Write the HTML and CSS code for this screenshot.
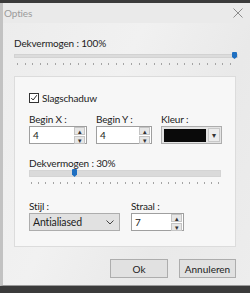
FILE: index.html
```html
<!DOCTYPE html>
<html>
<head>
<meta charset="utf-8">
<link rel="stylesheet" href="styles.css">
</head>
<body>
<div class="window">
  <div class="titlebar">
    <span class="title">Opties</span>
    <span class="close">
      <svg width="10" height="10" viewBox="0 0 10 10"><path d="M0.5 0.5 L9.5 9.5 M9.5 0.5 L0.5 9.5" stroke="#8c8c8c" stroke-width="1" fill="none"/></svg>
    </span>
  </div>
  <div class="content">
    <div class="label top-label">Dekvermogen : 100%</div>
    <div class="slider slider-main">
      <div class="track"></div>
      <div class="thumb" style="left: 218px"></div>
      <div class="ticks"></div>
    </div>

    <div class="panel">
      <label class="check-row">
        <span class="checkbox">
          <svg width="10" height="10" viewBox="0 0 10 10"><path d="M1.5 5 L4 7.5 L8.5 1.5" stroke="#222" stroke-width="1.2" fill="none"/></svg>
        </span>
        <span class="check-text">Slagschaduw</span>
      </label>

      <div class="row fields">
        <div class="field">
          <div class="label">Begin X :</div>
          <div class="spin w58">
            <span class="value">4</span>
            <span class="spin-btns"><span class="sb">▴</span><span class="sb">▾</span></span>
          </div>
        </div>
        <div class="field">
          <div class="label">Begin Y :</div>
          <div class="spin w56">
            <span class="value">4</span>
            <span class="spin-btns"><span class="sb">▴</span><span class="sb">▾</span></span>
          </div>
        </div>
        <div class="field">
          <div class="label">Kleur :</div>
          <div class="color">
            <span class="swatch"></span>
            <span class="drop">▾</span>
          </div>
        </div>
      </div>

      <div class="label mid-label">Dekvermogen : 30%</div>
      <div class="slider slider-inner">
        <div class="track"></div>
        <div class="thumb" style="left: 43px"></div>
        <div class="ticks"></div>
      </div>

      <div class="row fields2">
        <div class="field">
          <div class="label">Stijl :</div>
          <div class="combo">
            <span class="value">Antialiased</span>
            <svg class="chev" width="8" height="5" viewBox="0 0 8 5"><path d="M0.5 0.5 L4 4 L7.5 0.5" stroke="#444" fill="none"/></svg>
          </div>
        </div>
        <div class="field">
          <div class="label">Straal :</div>
          <div class="spin w53">
            <span class="value">7</span>
            <span class="spin-btns"><span class="sb">▴</span><span class="sb">▾</span></span>
          </div>
        </div>
      </div>
    </div>

    <div class="buttons">
      <button class="btn ok">Ok</button>
      <button class="btn">Annuleren</button>
    </div>
  </div>
</div>
</body>
</html>
```

FILE: styles.css
```css
html, body {
  margin: 0;
  padding: 0;
}
body {
  width: 250px;
  height: 293px;
  background: #3b3b3b;
  font-family: "Lato", "Noto Sans", sans-serif;
  font-size: 10px;
  letter-spacing: -0.15px;
  color: #1c1c1c;
  overflow: hidden;
}
.window {
  margin-top: 3px;
  height: 283px;
  background: linear-gradient(115deg, #ececec 0%, #f1f1f1 40%, #e9e9e9 70%, #ededed 100%);
  border-left: 3px solid #c2c2c2;
  border-bottom: 1px solid #9a9a9a;
  box-sizing: border-box;
  position: relative;
}
.titlebar {
  height: 20px;
  display: flex;
  align-items: center;
  justify-content: space-between;
  padding: 0 7px 0 1px;
  background: #eaeaea;
}
.title {
  color: #9b9b9b;
  font-size: 10px;
}
.close {
  display: flex;
  align-items: center;
}
.content {
  padding: 0 11px 0 11px;
}
.label {
  line-height: 12px;
  white-space: nowrap;
}
.top-label {
  margin-top: 14px;
}
.slider {
  position: relative;
}
.slider-main {
  height: 16px;
  margin-top: 3px;
}
.slider .track {
  position: absolute;
  left: 0;
  right: 0;
  background: #dcdcdc;
  border: 1px solid #d2d2d2;
}
.slider-main .track {
  top: 2px;
  height: 2px;
  right: 1px;
}
.slider .thumb {
  position: absolute;
  top: 0;
  width: 5px;
  height: 7px;
  background: #1f6fc1;
  border-radius: 1px 1px 0 0;
  clip-path: polygon(0 0, 100% 0, 100% 70%, 50% 100%, 0 70%);
}
.slider .ticks {
  position: absolute;
  left: 3px;
  right: 2px;
  height: 2px;
  background: repeating-linear-gradient(90deg, #a4a4a4 0, #a4a4a4 1px, transparent 1px, transparent 7.6px);
}
.slider-main .ticks {
  top: 11px;
}
.panel {
  margin-top: 8px;
  width: 222px;
  height: 171px;
  box-sizing: border-box;
  background: #f7f7f7;
  border: 1px solid #dcdcdc;
  padding: 15px 0 0 14px;
}
.check-row {
  display: flex;
  align-items: center;
  gap: 3px;
  height: 12px;
}
.checkbox {
  width: 10px;
  height: 10px;
  box-sizing: border-box;
  border: 1px solid #333;
  background: #fff;
  display: flex;
  align-items: center;
  justify-content: center;
}
.checkbox svg {
  width: 8px;
  height: 8px;
}
.row {
  display: flex;
}
.fields {
  margin-top: 9px;
  gap: 9px;
}
.field .label {
  margin-bottom: 1px;
}
.spin {
  height: 18px;
  box-sizing: border-box;
  border: 1px solid #9f9f9f;
  background: #fff;
  display: flex;
  align-items: center;
  justify-content: space-between;
  padding: 0 1px 0 3px;
}
.w58 { width: 58px; }
.w56 { width: 56px; }
.w53 { width: 53px; }
.spin .value {
  font-size: 10px;
}
.spin-btns {
  display: flex;
  flex-direction: column;
  gap: 1px;
}
.sb {
  width: 9px;
  height: 6px;
  background: #e6e6e6;
  border: 1px solid #c4c4c4;
  font-size: 7px;
  line-height: 6px;
  text-align: center;
  color: #333;
  overflow: hidden;
}
.color {
  width: 61px;
  height: 18px;
  box-sizing: border-box;
  border: 1px solid #adadad;
  background: #e4e4e4;
  display: flex;
  align-items: center;
  padding: 1px 1px 1px 2px;
  gap: 2px;
}
.swatch {
  width: 42px;
  height: 13px;
  background: #0a0a0a;
}
.drop {
  width: 12px;
  height: 14px;
  background: #ececec;
  border: 1px solid #c8c8c8;
  box-sizing: border-box;
  font-size: 8px;
  line-height: 12px;
  text-align: center;
  color: #333;
}
.mid-label {
  margin-top: 13px;
}
.slider-inner {
  height: 16px;
  width: 192px;
  margin-top: 0;
}
.slider-inner .track {
  top: 1px;
  height: 5px;
  background: #dadada;
  border-color: #d4d4d4;
}
.slider-inner .thumb {
  top: 0;
  height: 8px;
}
.slider-inner .ticks {
  top: 13px;
  left: 2px;
  background: repeating-linear-gradient(90deg, #a4a4a4 0, #a4a4a4 1px, transparent 1px, transparent 7.2px);
}
.fields2 {
  margin-top: 15px;
  gap: 11px;
}
.combo {
  width: 91px;
  height: 18px;
  box-sizing: border-box;
  border: 1px solid #adadad;
  background: #e1e1e1;
  display: flex;
  align-items: center;
  justify-content: space-between;
  padding: 0 5px 0 3px;
}
.combo .value {
  font-size: 10.5px;
}
.buttons {
  display: flex;
  justify-content: flex-end;
  gap: 11px;
  margin-top: 12px;
  width: 222px;
}
.btn {
  font-family: inherit;
  font-size: 10px;
  color: #1c1c1c;
  height: 19px;
  padding: 0;
  background: #e1e1e1;
  border: 1px solid #adadad;
}
.ok {
  width: 58px;
}
.btn:not(.ok) {
  width: 57px;
}
```
